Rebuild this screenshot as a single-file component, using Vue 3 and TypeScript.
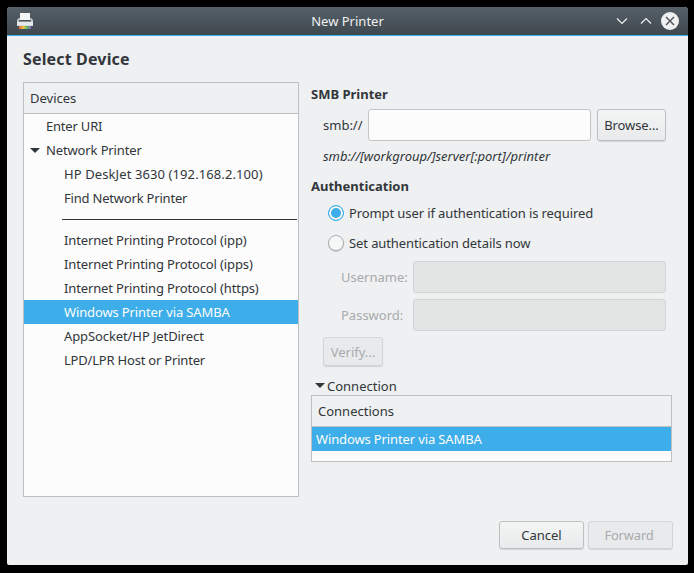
<script setup lang="ts">
const rows: { t: string; lvl: number; open?: boolean; fit: string }[] = [
  { t: 'Enter URI', lvl: 0, fit: 'fit-20' },
  { t: 'Network Printer', lvl: 0, open: true, fit: 'fit-13' },
  { t: 'HP DeskJet 3630 (192.168.2.100)', lvl: 1, fit: 'fit-up' },
  { t: 'Find Network Printer', lvl: 1, fit: 'fit-20' },
]
const rows2: { t: string; sel?: boolean; fit: string }[] = [
  { t: 'Internet Printing Protocol (ipp)', fit: 'fit-13' },
  { t: 'Internet Printing Protocol (ipps)', fit: 'fit-13' },
  { t: 'Internet Printing Protocol (https)', fit: 'fit-13' },
  { t: 'Windows Printer via SAMBA', sel: true, fit: 'fit-13' },
  { t: 'AppSocket/HP JetDirect', fit: 'fit-10' },
  { t: 'LPD/LPR Host or Printer', fit: 'fit-20' },
]
</script>

<template>
  <div class="page">
    <div class="window">
      <header class="titlebar">
        <svg class="app-icon" width="18" height="18" viewBox="0 0 18 18">
          <defs>
            <linearGradient id="rainbow" x1="0" x2="1" y1="0" y2="0">
              <stop offset="0" stop-color="#e8604c" />
              <stop offset="0.35" stop-color="#f0c040" />
              <stop offset="0.65" stop-color="#58c060" />
              <stop offset="1" stop-color="#8a60d0" />
            </linearGradient>
          </defs>
          <rect x="4" y="1" width="10" height="7" fill="#f4f5f5" />
          <path d="M1 8 L3 6 H4 V8 H14 V6 H15 L17 8 V14 H1 Z" fill="#c3c8cb" />
          <rect x="3" y="8" width="12" height="1.5" fill="#4c555b" />
          <rect x="1" y="10" width="16" height="3.5" fill="#e6e9ea" />
          <rect x="3" y="14" width="12" height="3" fill="url(#rainbow)" />
        </svg>
        <span class="win-title">New Printer</span>
        <div class="win-controls">
          <svg width="12" height="8" viewBox="0 0 12 8"><path d="M1 1.5 L6 6.5 L11 1.5" fill="none" stroke="#eff0f1" stroke-width="1.2" /></svg>
          <svg width="12" height="8" viewBox="0 0 12 8"><path d="M1 6.5 L6 1.5 L11 6.5" fill="none" stroke="#eff0f1" stroke-width="1.2" /></svg>
          <svg width="18" height="18" viewBox="0 0 18 18"><circle cx="9" cy="9" r="9" fill="#eff0f1" /><path d="M5 5 L13 13 M13 5 L5 13" stroke="#4a5359" stroke-width="1.4" /></svg>
        </div>
      </header>

      <main class="content">
        <h1 class="heading">Select Device</h1>
        <div class="columns">
          <section class="tree">
            <div class="head">Devices</div>
            <div class="tree-body">
              <div v-for="r in rows" :key="r.t" class="row" :class="[r.lvl ? 'lvl1' : 'lvl0', r.fit]">
                <span v-if="r.open" class="arrow"></span>{{ r.t }}
              </div>
              <div class="sep"></div>
              <div v-for="r in rows2" :key="r.t" class="row lvl1" :class="[r.fit, { sel: r.sel }]">{{ r.t }}</div>
            </div>
          </section>

          <section class="side">
            <h2 class="sub first">SMB Printer</h2>
            <div class="uri-line">
              <span>smb://</span>
              <div class="input uri"></div>
              <div class="btn browse fit-10">Browse...</div>
            </div>
            <div class="hint">smb://[workgroup/]server[:port]/printer</div>
            <h2 class="sub auth">Authentication</h2>
            <div class="radio-line one fit-10"><span class="radio on"></span>Prompt user if authentication is required</div>
            <div class="radio-line two fit-10"><span class="radio"></span>Set authentication details now</div>
            <div class="cred user"><span>Username:</span><div class="input off"></div></div>
            <div class="cred pass"><span>Password:</span><div class="input off"></div></div>
            <div class="btn disabled verify">Verify...</div>
            <div class="expander"><span class="arrow small"></span>Connection</div>
            <div class="conn">
              <div class="conn-head">Connections</div>
              <div class="conn-sel fit-13">Windows Printer via SAMBA</div>
              <div class="conn-rest"></div>
            </div>
          </section>
        </div>
        <footer class="actions">
          <div class="btn action">Cancel</div>
          <div class="btn action disabled fit-20 forward">Forward</div>
        </footer>
      </main>
    </div>
  </div>
</template>

<style>
html, body { margin: 0; background: #000; }
</style>

<style scoped>
.page {
  width: 694px;
  height: 573px;
  box-sizing: border-box;
  padding: 7px 6px 8px 7px;
  background: #000;
  font-family: "Noto Sans", sans-serif;
  font-size: 13px;
  color: #31363b;
  overflow: hidden;
}
.fit-10 { letter-spacing: -0.1px; }
.fit-13 { letter-spacing: -0.13px; }
.fit-20 { letter-spacing: -0.2px; }
.fit-up { letter-spacing: 0.1px; }
.window {
  height: 100%;
  display: flex;
  flex-direction: column;
  background: #eff0f1;
  border-radius: 4px 4px 2px 2px;
  overflow: hidden;
}
.titlebar {
  height: 28px;
  flex: none;
  display: flex;
  align-items: center;
  justify-content: center;
  position: relative;
  color: #eff0f1;
  background: linear-gradient(#566069, #3f484e);
  border-bottom: 1px solid #3daee9;
}
.app-icon { position: absolute; left: 9px; top: 5px; }
.win-controls {
  position: absolute;
  right: 9px;
  top: 4px;
  height: 19px;
  display: flex;
  align-items: center;
  gap: 12px;
}
.win-controls svg:nth-child(2) { margin-right: -3px; }
.content {
  flex: 1;
  min-height: 0;
  display: flex;
  flex-direction: column;
  padding: 0 15px 15px 16px;
}
.heading {
  margin: 12px 0 12px;
  font-size: 16px;
  line-height: 22px;
  font-weight: 700;
  letter-spacing: 0.15px;
  color: #31363b;
}
.columns { display: flex; gap: 12px; }
.tree {
  width: 276px;
  height: 415px;
  box-sizing: border-box;
  flex: none;
  background: #fcfcfc;
  border: 1px solid #bdbfc0;
}
.head {
  height: 30px;
  line-height: 30px;
  padding-left: 6px;
  background: #eff0f1;
  border-bottom: 1px solid #bdbfc0;
}
.row { height: 24px; line-height: 24px; white-space: nowrap; }
.lvl0 { padding-left: 22px; position: relative; }
.lvl1 { padding-left: 40px; }
.sel { background: #3daee9; color: #fcfcfc; }
.arrow {
  position: absolute;
  left: 6px;
  top: 10px;
  width: 0;
  height: 0;
  border-left: 5px solid transparent;
  border-right: 5px solid transparent;
  border-top: 5px solid #31363b;
}
.sep { height: 1px; margin: 9px 1px 8px 38px; background: #31363b; }
.side { flex: 1; min-width: 0; }
.sub { margin: 0; font-size: 13px; line-height: 18px; font-weight: 700; }
.first { margin-top: 3px; }
.uri-line { display: flex; align-items: center; margin: 6px 0 0 12px; height: 32px; }
.uri-line > span { width: 45px; flex: none; }
.input {
  box-sizing: border-box;
  height: 32px;
  background: #fcfcfc;
  border: 1px solid #c3c5c6;
  border-radius: 3px;
}
.uri { width: 223px; flex: none; }
.btn {
  box-sizing: border-box;
  display: flex;
  align-items: center;
  justify-content: center;
  background: linear-gradient(#f3f4f4, #e9eaeb);
  border: 1px solid #bdbfc0;
  border-radius: 3px;
  box-shadow: 0 1px 1px rgba(0, 0, 0, 0.12);
}
.browse { width: 69px; height: 32px; margin-left: 6px; }
.hint { margin: 6px 0 0 12px; line-height: 18px; font-style: italic; }
.auth { margin-top: 12px; }
.radio-line { display: flex; align-items: center; height: 20px; margin-left: 17px; }
.one { margin-top: 8px; }
.two { margin-top: 10px; }
.radio {
  box-sizing: border-box;
  width: 16px;
  height: 16px;
  margin-right: 5px;
  border-radius: 50%;
  background: #f6f7f7;
  border: 1px solid #a9abad;
  box-shadow: 0 1px 1px rgba(0, 0, 0, 0.15);
}
.radio.on { background: #3daee9; border-color: #3daee9; box-shadow: inset 0 0 0 2px #f6f7f7; }
.cred { display: flex; align-items: center; height: 32px; margin-left: 30px; color: #a8aaac; }
.user { margin-top: 8px; }
.pass { margin-top: 6px; }
.cred > span { width: 72px; flex: none; }
.off { width: 253px; flex: none; background: #e3e4e4; border-color: #d3d4d5; }
.disabled { color: #a8aaac; border-color: #d3d4d5; background: #e9eaeb; }
.verify { width: 60px; height: 29px; margin: 6px 0 0 12px; }
.expander { position: relative; height: 18px; line-height: 18px; margin-top: 11px; padding-left: 16px; }
.arrow.small { left: 4px; top: 6px; }
.conn {
  box-sizing: border-box;
  width: 361px;
  height: 67px;
  background: #fcfcfc;
  border: 1px solid #bdbfc0;
}
.conn-head {
  box-sizing: border-box;
  height: 31px;
  line-height: 30px;
  padding-left: 6px;
  background: #eff0f1;
  border-bottom: 1px solid #bdbfc0;
}
.conn-sel { height: 24px; line-height: 24px; padding-left: 4px; background: #3daee9; color: #fcfcfc; }
.actions { display: flex; justify-content: flex-end; gap: 4px; margin-top: 24px; }
.action { width: 85px; height: 28px; }
.forward { padding-right: 3px; }
</style>
